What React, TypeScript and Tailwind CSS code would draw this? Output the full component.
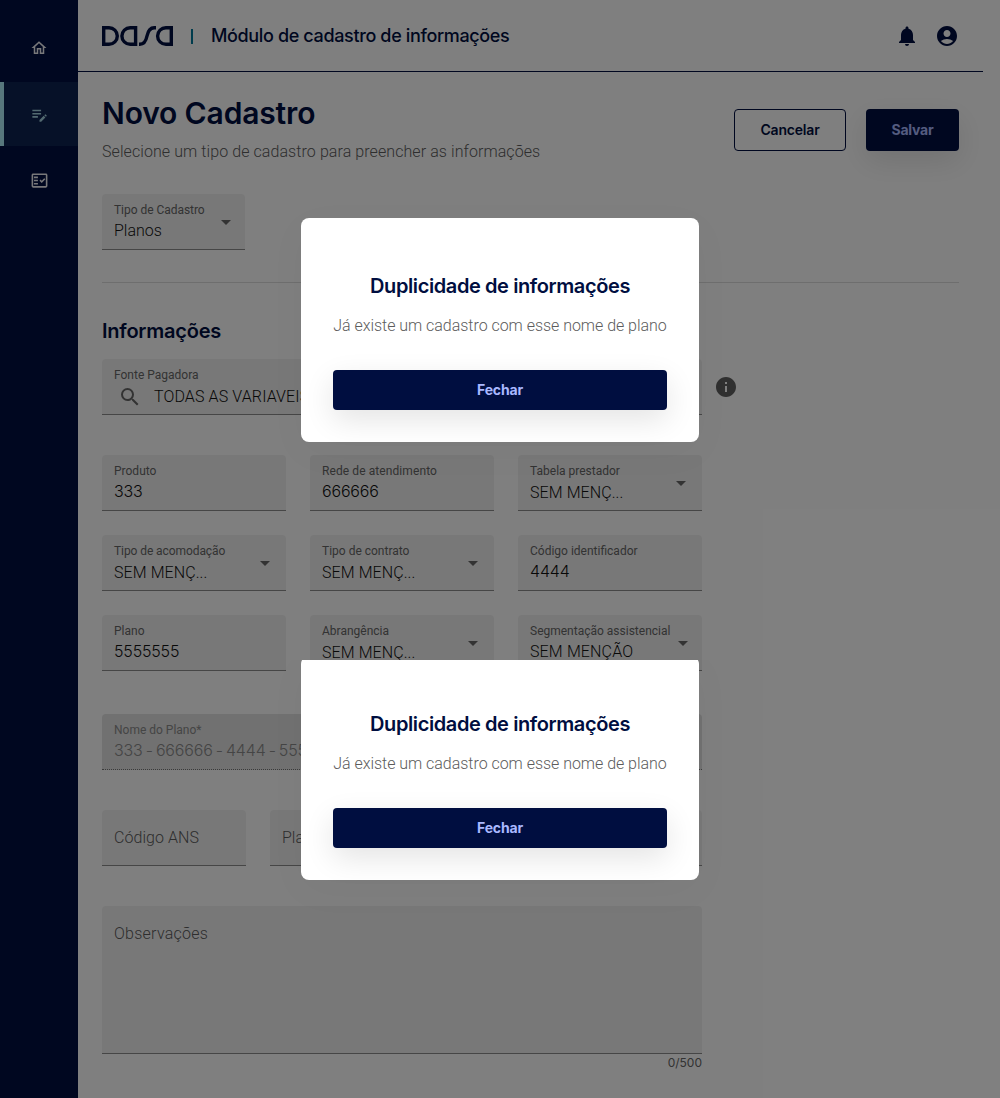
import React from 'react';
import {
  MdAccountCircle,
  MdArrowDropDown,
  MdEditNote,
  MdInfo,
  MdNotifications,
  MdOutlineFactCheck,
  MdOutlineHome,
  MdSearch,
} from 'react-icons/md';

function Logo() {
  return (
    <svg width="71" height="20" viewBox="0 0 71 20" fill="none" stroke="#000e40" strokeWidth="3.4">
      <path d="M1.700 1.700H7a8.300 8.300 0 0 1 0 16.600H1.700Z" />
      <path d="M33.600 1.700V18.300H28.200a8.300 8.300 0 0 1 0-16.600Z" />
      <path d="M37 18.300h.8c4.400 0 6.200-3.300 7.200-8.300s2.800-8.300 7.200-8.300H54" />
      <path d="M69.300 1.700V18.300H63.900a8.300 8.300 0 0 1 0-16.600Z" />
    </svg>
  );
}

function Sidebar() {
  return (
    <aside className="flex w-[78px] shrink-0 flex-col bg-[#000e40] pt-4 text-[#f0f0f4]">
      <a className="flex h-[66px] items-center justify-center pb-0.5">
        <MdOutlineHome size={18} />
      </a>
      <a className="flex h-16 items-center justify-center border-l-4 border-[#aeeef9] bg-[#0c2250] pr-1 text-[#a6d5e2]">
        <MdEditNote size={19} />
      </a>
      <a className="flex h-[68px] items-center justify-center">
        <MdOutlineFactCheck size={19} />
      </a>
    </aside>
  );
}

type FieldProps = {
  label: string;
  labelClass?: string;
  value?: string;
  valueClass?: string;
  className?: string;
  select?: boolean;
  arrowClass?: string;
  search?: boolean;
  disabled?: boolean;
};

const digits = "font-['Inter'] tracking-[-0.17px]";
const truncated = 'pt-0.5 tracking-[0.08px]';

function Field({
  label,
  labelClass = '',
  value,
  valueClass = '',
  className = '',
  select,
  arrowClass = 'mr-[9px]',
  search,
  disabled,
}: FieldProps) {
  return (
    <div
      className={`flex h-14 min-w-0 items-center justify-between rounded-t border-b pl-3 ${
        disabled
          ? 'border-dotted border-[#777] bg-[#e2e2e2] text-[#8a8a8a]'
          : 'border-[#8c8c8c] bg-[#f1f1f1] text-[#101010]'
      } ${className}`}
    >
      {value ? (
        <div className="flex h-full min-w-0 flex-1 flex-col pt-2 whitespace-nowrap">
          <span className={`text-xs leading-4 font-normal ${disabled ? '' : 'text-[#666]'} ${labelClass}`}>{label}</span>
          <span className={`flex items-center text-base leading-6 ${valueClass}`}>
            {search && <MdSearch size={24} className="mr-3 ml-1 text-[#666]" />}
            {value}
          </span>
        </div>
      ) : (
        <span className={`text-base text-[#5c5c5c] ${labelClass}`}>{label}</span>
      )}
      {select && <MdArrowDropDown size={24} className={`-ml-6 shrink-0 text-[#666] ${arrowClass}`} />}
    </div>
  );
}

function Dialog({ className = '' }: { className?: string }) {
  return (
    <section
      className={`absolute left-[301px] flex h-56 w-[398px] flex-col items-center rounded-lg bg-white px-8 pt-[53px] shadow-[0_10px_40px_rgba(0,0,0,0.03)] ${className}`}
    >
      <h2 className="font-['Inter'] text-xl leading-[30px] font-semibold tracking-[-0.4px] whitespace-nowrap text-[#000e40]">
        Duplicidade de informações
      </h2>
      <p className="mt-[13px] text-base leading-6 tracking-[-0.03px] whitespace-nowrap text-[#5c5c5c]">
        Já existe um cadastro com esse nome de plano
      </p>
      <button className="mt-8 h-10 w-full shrink-0 rounded bg-[#000e40] font-['Inter'] text-sm font-bold tracking-[-0.17px] text-[#a9b8ff] shadow-[0_10px_30px_rgba(0,0,0,0.11)]">
        Fechar
      </button>
    </section>
  );
}

export default function App() {
  return (
    <div className="relative flex h-[1098px] w-[1000px] overflow-hidden bg-white font-['Roboto',sans-serif] font-[350]">
      <Sidebar />
      <div className="mr-[17px] flex flex-1 flex-col">
        <header className="flex h-[72px] items-center border-b border-[#000e40] px-6 text-[#000e40]">
          <Logo />
          <span className="mt-px ml-[18px] h-[15px] w-[1.5px] bg-[#00789a]" />
          <h1 className="ml-[18.5px] font-['Inter'] text-lg font-[450] tracking-[-0.36px] whitespace-nowrap">
            Módulo de cadastro de informações
          </h1>
          <div className="ml-auto flex gap-4">
            <MdNotifications size={24} />
            <MdAccountCircle size={24} />
          </div>
        </header>

        <main className="px-6">
          <div className="flex justify-between pt-[19px]">
            <div>
              <h2 className="font-['Inter'] text-[30px] leading-[45px] font-semibold tracking-[-0.15px] text-[#000e40]">
                Novo Cadastro
              </h2>
              <p className="mt-1 text-base leading-6 tracking-[0.08px] text-[#5c5c5c]">
                Selecione um tipo de cadastro para preencher as informações
              </p>
            </div>
            <div className="mt-[18px] flex h-[42px] gap-5 font-['Inter'] text-sm font-bold">
              <button className="w-28 rounded border border-[#000e40] font-semibold tracking-[-0.2px] text-[#000e40]">
                Cancelar
              </button>
              <button className="w-[93px] rounded bg-[#000e40] tracking-[-0.22px] text-[#a9b8ff] shadow-[0_10px_30px_rgba(0,0,0,0.11)]">
                Salvar
              </button>
            </div>
          </div>

          <Field
            label="Tipo de Cadastro"
            labelClass="tracking-[-0.04px]"
            value="Planos"
            valueClass="pt-px"
            className="mt-[30px] w-[143px]"
            select
            arrowClass="mr-[7px]"
          />
          <hr className="mt-8 border-[#dcdcdc]" />

          <h3 className="mt-[33px] font-['Inter'] text-xl leading-[30px] font-semibold tracking-[-0.23px] text-[#000e40]">
            Informações
          </h3>

          <div className="mt-[13px] flex items-center">
            <Field
              label="Fonte Pagadora"
              value="TODAS AS VARIAVEIS"
              valueClass="pt-0.5 tracking-[0.12px]"
              className="w-[600px]"
              search
            />
            <MdInfo size={24} className="ml-3 text-[#606060]" />
          </div>

          <div className="w-[600px]">
            <div className="mt-10 grid grid-cols-3 gap-6">
              <Field label="Produto" value="333" valueClass={digits} />
              <Field label="Rede de atendimento" labelClass="tracking-[0.09px]" value="666666" valueClass={digits} />
              <Field label="Tabela prestador" value="SEM MENÇ..." valueClass={truncated} select />
              <Field label="Tipo de acomodação" labelClass="tracking-[-0.08px]" value="SEM MENÇ..." valueClass={truncated} select />
              <Field label="Tipo de contrato" value="SEM MENÇ..." valueClass={truncated} select />
              <Field label="Código identificador" value="4444" valueClass={digits} />
              <Field label="Plano" value="5555555" valueClass={digits} />
              <Field label="Abrangência" value="SEM MENÇ..." valueClass={truncated} select />
              <Field
                label="Segmentação assistencial"
                value="SEM MENÇÃO"
                valueClass="pt-px tracking-[0.14px]"
                select
                arrowClass="mr-[7px]"
              />
            </div>

            <Field
              className="mt-[43px]"
              label="Nome do Plano*"
              value="333 - 666666 - 4444 - 5555555"
              valueClass="font-['Inter'] tracking-[-0.17px] [word-spacing:-1.200px]"
              disabled
            />

            <div className="mt-10 flex gap-6">
              <Field label="Código ANS" labelClass="tracking-[0.05px]" className="w-36" />
              <Field label="Plano" className="flex-1" />
            </div>

            <div className="mt-10 h-[148px] rounded-t border-b border-[#8c8c8c] bg-[#f1f1f1] px-3 pt-4 text-base leading-6 tracking-[0.25px] text-[#5c5c5c]">
              Observações
            </div>
            <p className="mt-px text-right font-['Inter'] text-xs leading-4 font-normal text-[#666]">0/500</p>
          </div>
        </main>
      </div>

      <div className="absolute inset-0 bg-black/50" />
      <Dialog className="top-[218px]" />
      <Dialog className="top-[656px] [clip-path:inset(4px_-60px_-60px_-60px)]" />
    </div>
  );
}
